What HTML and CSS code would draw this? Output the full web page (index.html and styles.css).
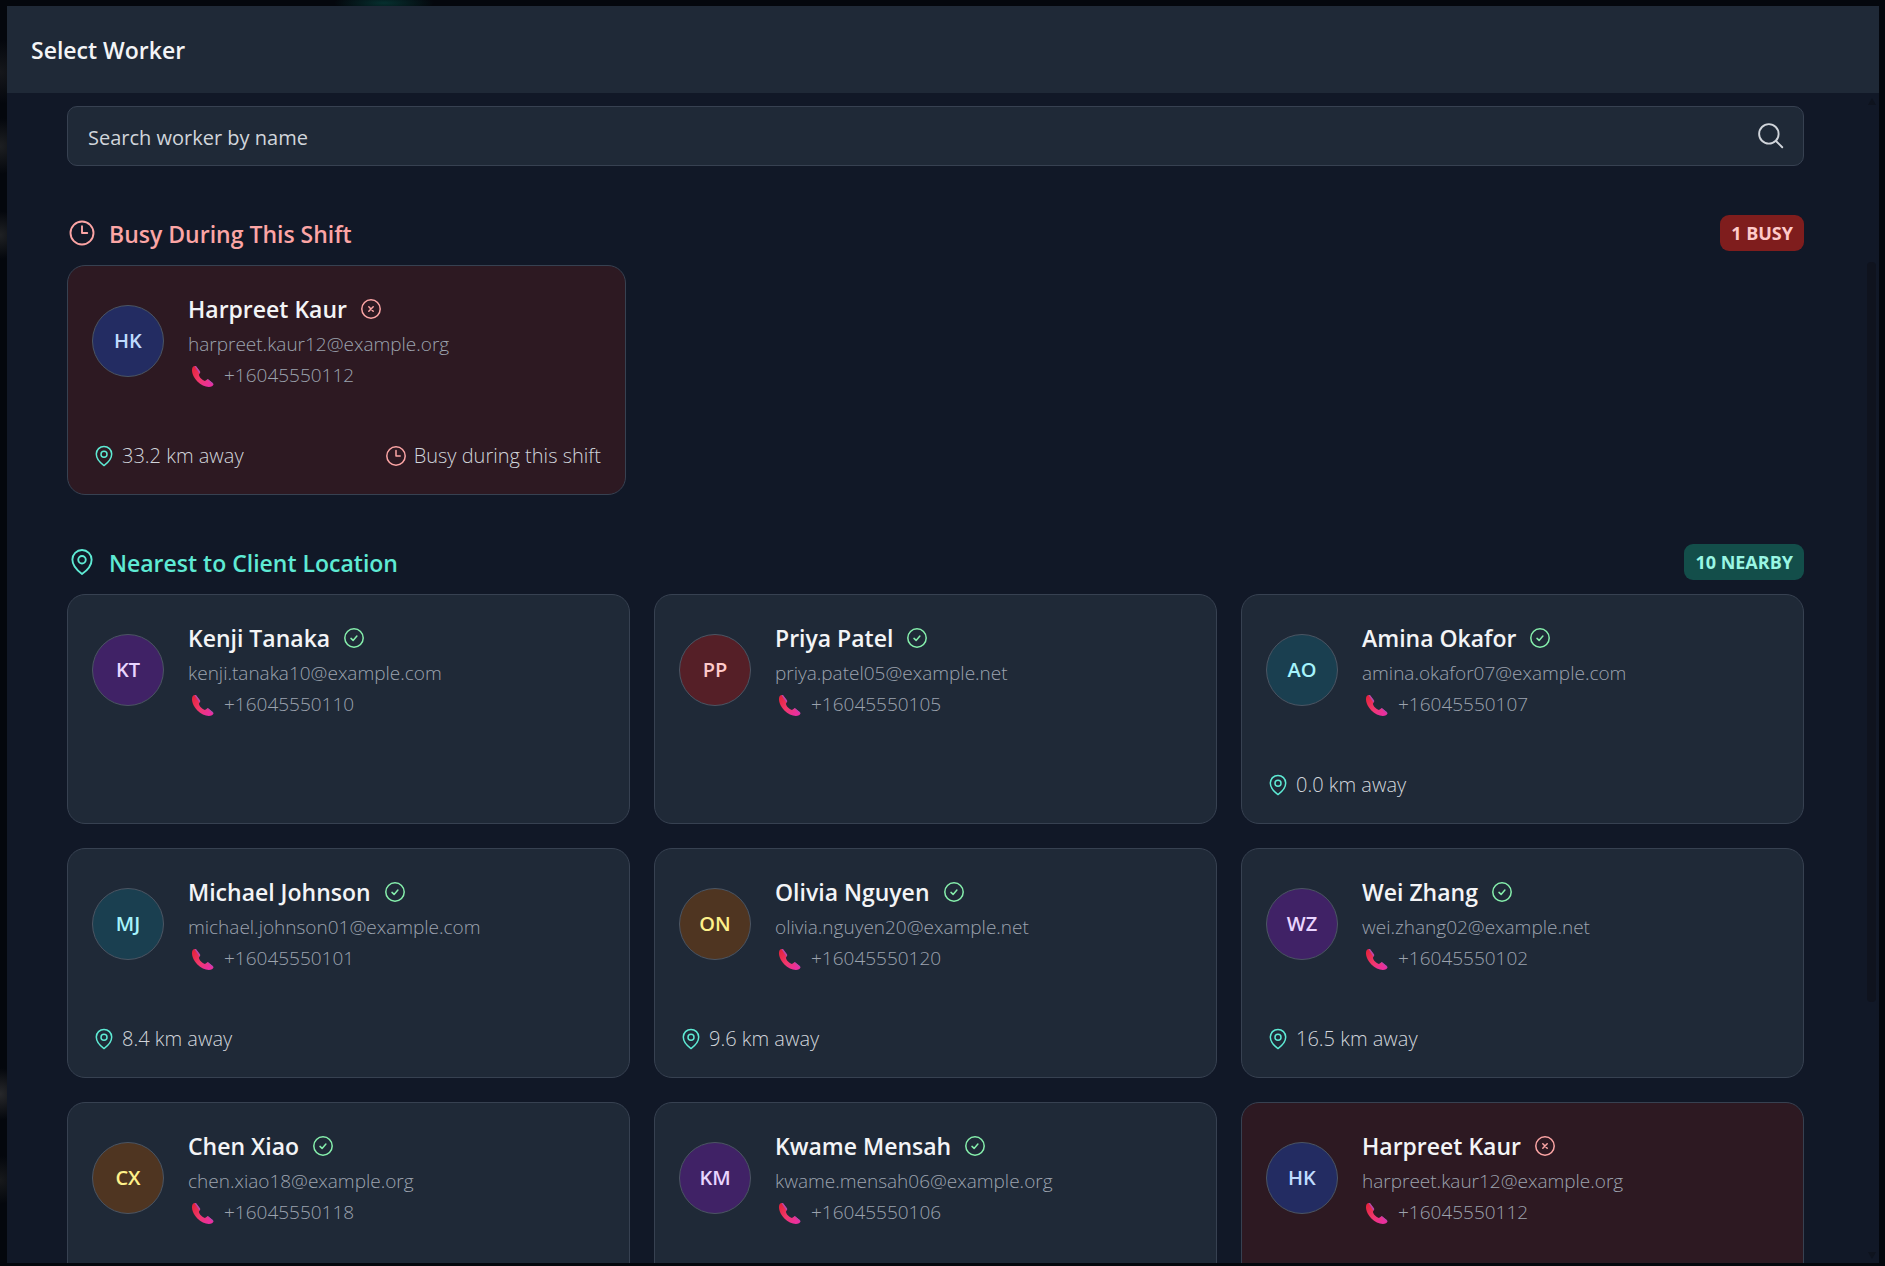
FILE: index.html
```html
<!DOCTYPE html>
<html lang="en">
<head>
<meta charset="utf-8">
<meta name="viewport" content="width=device-width, initial-scale=1">
<title>Select Worker</title>
<link rel="stylesheet" href="styles.css">
</head>
<body>
<svg class="sprite" aria-hidden="true">
  <defs>
    <linearGradient id="phone-fill" x1="0" y1="0" x2="1" y2="1">
      <stop offset="0.1" stop-color="#e5243f"/>
      <stop offset="0.5" stop-color="#f0386b"/>
      <stop offset="0.85" stop-color="#ea2f9d"/>
    </linearGradient>
    <symbol id="clock" viewBox="0 0 24 24"><circle cx="12" cy="12" r="9.2"/><path d="M12 6.5V12h4.2"/></symbol>
    <symbol id="pin" viewBox="0 0 24 24"><path d="M12 21.6C10.6 20.6 4.3 15.8 4.3 10.1a7.7 7.7 0 0 1 15.4 0C19.7 15.8 13.4 20.6 12 21.6Z"/><circle cx="12" cy="10.2" r="3"/></symbol>
    <symbol id="check" viewBox="0 0 24 24"><circle cx="12" cy="12" r="9.2"/><path d="M9 12.4l2.1 2 3.8-4.4"/></symbol>
    <symbol id="cross" viewBox="0 0 24 24"><circle cx="12" cy="12" r="9.2"/><path d="M9.8 9.8l4.4 4.4M14.2 9.8l-4.400 4.4"/></symbol>
    <symbol id="search" viewBox="0 0 24 24"><circle cx="10.3" cy="10.3" r="7.8"/><path d="M16 16l5 5"/></symbol>
    <symbol id="phone" viewBox="0 0 30 30">
      <path fill="url(#phone-fill)" d="M4.6 6.2C6 4.400 7.800 4.600 8.700 5.900L12 10.500C12.700 11.600 11.300 12.600 10.900 13.800C11.400 16.400 14.200 19.300 16.900 19.900C18.300 19.600 19.200 17.700 20.300 18.500L24.700 21.900C25.800 22.900 25.500 24.300 24 25.200C20 27.300 13.600 24.500 9.400 20.400C5.300 16.300 2.700 10 4.600 6.200Z"/>
      <path fill="#b04bb0" d="M7.300 5C8 5 8.400 5.400 8.700 5.900L12 10.500C12.500 11.300 12 12 11.500 12.600L6.600 5.200ZM19 18.600C19.400 18.200 19.800 18.200 20.300 18.500L24.700 21.900C25.300 22.500 25.500 23.100 25.200 23.700Z"/>
    </symbol>
  </defs>
</svg>

<div class="dialog" role="dialog" aria-labelledby="dialog-title">
  <header class="dialog-header"><h1 class="title" id="dialog-title">Select Worker</h1></header>
  <div class="dialog-body">
    <main class="content">
      <form class="search">
        <input class="search-input" type="text" placeholder="Search worker by name" aria-label="Search worker by name">
        <button class="search-button" type="button" aria-label="Search"><svg class="icon icon-lg"><use href="#search"/></svg></button>
      </form>

      <section class="section">
        <div class="section-head busy-text">
          <svg class="icon icon-lg"><use href="#clock"/></svg>
          <h2 class="section-title">Busy During This Shift</h2>
          <span class="badge badge-busy">1 BUSY</span>
        </div>
        <div class="grid grid-wide">
          <article class="card card-busy">
            <div class="person">
              <div class="avatar blue">HK</div>
              <div class="info">
                <h3 class="name">Harpreet Kaur <svg class="icon busy-text"><use href="#cross"/></svg></h3>
                <p class="line">harpreet.kaur12@example.org</p>
                <p class="line phone"><svg class="phone-icon"><use href="#phone"/></svg>+16045550112</p>
              </div>
            </div>
            <div class="foot">
              <span class="fact"><svg class="icon near-text"><use href="#pin"/></svg>33.2 km away</span>
              <span class="fact"><svg class="icon busy-text"><use href="#clock"/></svg>Busy during this shift</span>
            </div>
          </article>
        </div>
      </section>

      <section class="section">
        <div class="section-head near-text">
          <svg class="icon icon-lg"><use href="#pin"/></svg>
          <h2 class="section-title">Nearest to Client Location</h2>
          <span class="badge badge-near">10 NEARBY</span>
        </div>
        <div class="grid">
          <article class="card">
            <div class="person">
              <div class="avatar purple">KT</div>
              <div class="info">
                <h3 class="name">Kenji Tanaka <svg class="icon free-text"><use href="#check"/></svg></h3>
                <p class="line">kenji.tanaka10@example.com</p>
                <p class="line phone"><svg class="phone-icon"><use href="#phone"/></svg>+16045550110</p>
              </div>
            </div>
          </article>
          <article class="card">
            <div class="person">
              <div class="avatar red">PP</div>
              <div class="info">
                <h3 class="name">Priya Patel <svg class="icon free-text"><use href="#check"/></svg></h3>
                <p class="line">priya.patel05@example.net</p>
                <p class="line phone"><svg class="phone-icon"><use href="#phone"/></svg>+16045550105</p>
              </div>
            </div>
          </article>
          <article class="card">
            <div class="person">
              <div class="avatar cyan">AO</div>
              <div class="info">
                <h3 class="name">Amina Okafor <svg class="icon free-text"><use href="#check"/></svg></h3>
                <p class="line">amina.okafor07@example.com</p>
                <p class="line phone"><svg class="phone-icon"><use href="#phone"/></svg>+16045550107</p>
              </div>
            </div>
            <div class="foot"><span class="fact"><svg class="icon near-text"><use href="#pin"/></svg>0.0 km away</span></div>
          </article>
          <article class="card">
            <div class="person">
              <div class="avatar cyan">MJ</div>
              <div class="info">
                <h3 class="name">Michael Johnson <svg class="icon free-text"><use href="#check"/></svg></h3>
                <p class="line">michael.johnson01@example.com</p>
                <p class="line phone"><svg class="phone-icon"><use href="#phone"/></svg>+16045550101</p>
              </div>
            </div>
            <div class="foot"><span class="fact"><svg class="icon near-text"><use href="#pin"/></svg>8.4 km away</span></div>
          </article>
          <article class="card">
            <div class="person">
              <div class="avatar amber">ON</div>
              <div class="info">
                <h3 class="name">Olivia Nguyen <svg class="icon free-text"><use href="#check"/></svg></h3>
                <p class="line">olivia.nguyen20@example.net</p>
                <p class="line phone"><svg class="phone-icon"><use href="#phone"/></svg>+16045550120</p>
              </div>
            </div>
            <div class="foot"><span class="fact"><svg class="icon near-text"><use href="#pin"/></svg>9.6 km away</span></div>
          </article>
          <article class="card">
            <div class="person">
              <div class="avatar purple">WZ</div>
              <div class="info">
                <h3 class="name">Wei Zhang <svg class="icon free-text"><use href="#check"/></svg></h3>
                <p class="line">wei.zhang02@example.net</p>
                <p class="line phone"><svg class="phone-icon"><use href="#phone"/></svg>+16045550102</p>
              </div>
            </div>
            <div class="foot"><span class="fact"><svg class="icon near-text"><use href="#pin"/></svg>16.5 km away</span></div>
          </article>
          <article class="card">
            <div class="person">
              <div class="avatar amber">CX</div>
              <div class="info">
                <h3 class="name">Chen Xiao <svg class="icon free-text"><use href="#check"/></svg></h3>
                <p class="line">chen.xiao18@example.org</p>
                <p class="line phone"><svg class="phone-icon"><use href="#phone"/></svg>+16045550118</p>
              </div>
            </div>
          </article>
          <article class="card">
            <div class="person">
              <div class="avatar purple">KM</div>
              <div class="info">
                <h3 class="name">Kwame Mensah <svg class="icon free-text"><use href="#check"/></svg></h3>
                <p class="line">kwame.mensah06@example.org</p>
                <p class="line phone"><svg class="phone-icon"><use href="#phone"/></svg>+16045550106</p>
              </div>
            </div>
          </article>
          <article class="card card-busy">
            <div class="person">
              <div class="avatar blue">HK</div>
              <div class="info">
                <h3 class="name">Harpreet Kaur <svg class="icon busy-text"><use href="#cross"/></svg></h3>
                <p class="line">harpreet.kaur12@example.org</p>
                <p class="line phone"><svg class="phone-icon"><use href="#phone"/></svg>+16045550112</p>
              </div>
            </div>
          </article>
        </div>
      </section>
    </main>
    <div class="rail" aria-hidden="true">
      <span class="arrow arrow-up"></span>
      <span class="track"><span class="thumb"></span></span>
      <span class="arrow arrow-down"></span>
    </div>
  </div>
</div>
</body>
</html>
```

FILE: styles.css
```css
* {
  box-sizing: border-box;
}

body {
  margin: 0;
  height: 100vh;
  padding: 6px 6px 3px 7px;
  overflow: hidden;
  display: flex;
  font-family: "Open Sans", "Noto Sans", sans-serif;
  font-size: 20px;
  line-height: 30px;
  color: #f3f4f6;
  background:
    radial-gradient(circle at 0 72px, #15171b, transparent 32px),
    radial-gradient(circle at 0 146px, #1d1f22, transparent 28px),
    radial-gradient(circle at 0 235px, #1f2124, transparent 24px),
    radial-gradient(circle at 0 1094px, #27282b, transparent 26px),
    radial-gradient(circle at 0 1180px, #17191c, transparent 24px),
    radial-gradient(ellipse 50px 10px at 384px 3px, #06302f, transparent),
    #04070d;
}

h1,
h2,
h3,
p {
  margin: 0;
}

.sprite {
  position: absolute;
  width: 0;
  height: 0;
}

.dialog {
  flex: 1;
  min-width: 0;
  display: flex;
  flex-direction: column;
  background: #111827;
}

.dialog-header {
  flex: none;
  padding: 26px 24px 25px;
  background: #1f2937;
}

.title {
  font-size: 23px;
  line-height: 36px;
  font-weight: 600;
}

.dialog-body {
  flex: 1;
  min-height: 0;
  display: flex;
}

.content {
  flex: 1;
  min-width: 0;
  padding: 13px 60px 0;
  overflow: hidden;
}

.search {
  display: flex;
  align-items: center;
  height: 60px;
  padding: 0 17px 0 20px;
  border: 1px solid #374151;
  border-radius: 10px;
  background: #1f2937;
}

.search-input {
  flex: 1;
  min-width: 0;
  padding: 3px 0 0;
  border: 0;
  outline: 0;
  background: none;
  color: inherit;
  font: inherit;
}

.search-input::placeholder {
  color: #d1d5db;
  opacity: 1;
}

.search-button {
  display: flex;
  padding: 0;
  border: 0;
  background: none;
  color: #d1d5db;
}

.icon {
  flex: none;
  width: 24px;
  height: 24px;
  fill: none;
  stroke: currentColor;
  stroke-width: 1.5;
  stroke-linecap: round;
  stroke-linejoin: round;
}

.icon-lg {
  width: 30px;
  height: 30px;
}

.section {
  margin-top: 49px;
}

.section-head {
  display: flex;
  align-items: center;
  gap: 12px;
  margin-bottom: 14px;
}

.section-title {
  flex: 1;
  padding-top: 2px;
  font-size: 23px;
  line-height: 34px;
  font-weight: 600;
}

.busy-text {
  color: #fca5a5;
}

.near-text {
  color: #5eead4;
}

.free-text {
  color: #86efac;
}

.badge {
  padding: 3px 11px;
  border-radius: 9px;
  font-size: 18px;
  font-weight: 700;
}

.badge-busy {
  background: #7f1d1d;
  color: #fecaca;
}

.badge-near {
  background: #134e4a;
  color: #99f6e4;
}

.grid {
  display: grid;
  grid-template-columns: repeat(3, minmax(0, 1fr));
  gap: 24px;
}

.grid-wide {
  gap: 30px;
}

.card {
  display: flex;
  flex-direction: column;
  justify-content: space-between;
  min-height: 230px;
  padding: 25px 24px 23px;
  border: 1px solid #374151;
  border-radius: 18px;
  background: #1f2937;
}

.card-busy {
  background: #2d1922;
}

.person {
  display: flex;
  align-items: center;
  gap: 24px;
}

.avatar {
  flex: none;
  width: 72px;
  height: 72px;
  display: flex;
  align-items: center;
  justify-content: center;
  border: 1px solid #4b5563;
  border-radius: 50%;
  font-weight: 600;
}

.blue { background: #232c62; color: #bfdbfe; }
.purple { background: #402266; color: #e9d5ff; }
.red { background: #551f27; color: #fecaca; }
.cyan { background: #1a3f50; color: #a5f3fc; }
.amber { background: #4f3521; color: #fef08a; }

.name {
  display: flex;
  align-items: center;
  gap: 12px;
  margin-bottom: 2px;
  font-size: 23px;
  line-height: 36px;
  font-weight: 600;
}

.line {
  font-size: 19px;
  line-height: 31px;
  font-weight: 300;
  color: #9ca3af;
}

.phone {
  display: flex;
  align-items: center;
  gap: 6px;
}

.phone-icon {
  width: 30px;
  height: 30px;
}

.foot {
  display: flex;
  justify-content: space-between;
}

.fact {
  display: flex;
  align-items: center;
  gap: 6px;
  font-weight: 300;
  color: #d1d5db;
}

.rail {
  flex: none;
  width: 15px;
  padding: 5px 3px 4px;
  display: flex;
  flex-direction: column;
  align-items: center;
  gap: 8px;
}

.arrow {
  border: 4px solid transparent;
}

.arrow-up {
  border-top: 0;
  border-bottom: 7px solid #0e131e;
}

.arrow-down {
  border-bottom: 0;
  border-top: 7px solid #0e131e;
}

.track {
  flex: 1;
  width: 9px;
  display: flex;
  flex-direction: column;
}

.track::before {
  content: "";
  flex: 149;
}

.track::after {
  content: "";
  flex: 242;
}

.thumb {
  flex: 740;
  border-radius: 4px;
  background: #0f131e;
}
```
